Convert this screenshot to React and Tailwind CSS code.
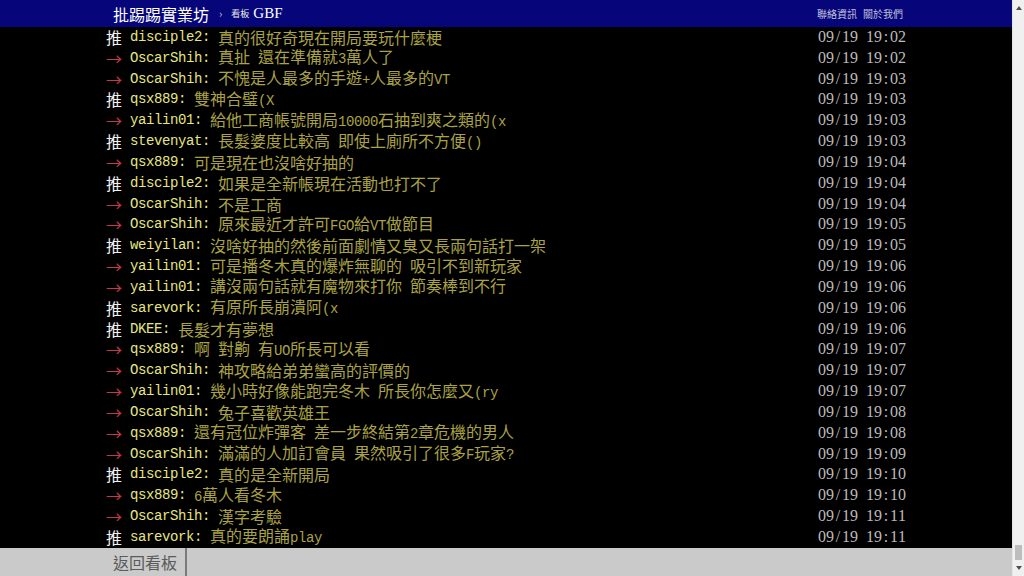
const pushes = [
  ['推', 'disciple2', '真的很好奇現在開局要玩什麼梗', '09/19 19:02'],
  ['→', 'OscarShih', '真扯 還在準備就3萬人了', '09/19 19:02'],
  ['→', 'OscarShih', '不愧是人最多的手遊+人最多的VT', '09/19 19:03'],
  ['推', 'qsx889', '雙神合璧(X', '09/19 19:03'],
  ['→', 'yailin01', '給他工商帳號開局10000石抽到爽之類的(x', '09/19 19:03'],
  ['推', 'stevenyat', '長髮婆度比較高 即使上廁所不方便()', '09/19 19:03'],
  ['→', 'qsx889', '可是現在也沒啥好抽的', '09/19 19:04'],
  ['推', 'disciple2', '如果是全新帳現在活動也打不了', '09/19 19:04'],
  ['→', 'OscarShih', '不是工商', '09/19 19:04'],
  ['→', 'OscarShih', '原來最近才許可FGO給VT做節目', '09/19 19:05'],
  ['推', 'weiyilan', '沒啥好抽的然後前面劇情又臭又長兩句話打一架', '09/19 19:05'],
  ['→', 'yailin01', '可是播冬木真的爆炸無聊的 吸引不到新玩家', '09/19 19:06'],
  ['→', 'yailin01', '講沒兩句話就有魔物來打你 節奏棒到不行', '09/19 19:06'],
  ['推', 'sarevork', '有原所長崩潰阿(x', '09/19 19:06'],
  ['推', 'DKEE', '長髮才有夢想', '09/19 19:06'],
  ['→', 'qsx889', '啊 對齁 有UO所長可以看', '09/19 19:07'],
  ['→', 'OscarShih', '神攻略給弟弟蠻高的評價的', '09/19 19:07'],
  ['→', 'yailin01', '幾小時好像能跑完冬木 所長你怎麼又(ry', '09/19 19:07'],
  ['→', 'OscarShih', '兔子喜歡英雄王', '09/19 19:08'],
  ['→', 'qsx889', '還有冠位炸彈客 差一步終結第2章危機的男人', '09/19 19:08'],
  ['→', 'OscarShih', '滿滿的人加訂會員 果然吸引了很多F玩家?', '09/19 19:09'],
  ['推', 'disciple2', '真的是全新開局', '09/19 19:10'],
  ['→', 'qsx889', '6萬人看冬木', '09/19 19:10'],
  ['→', 'OscarShih', '漢字考驗', '09/19 19:11'],
  ['推', 'sarevork', '真的要朗誦play', '09/19 19:11'],
];

// half-width runs get the narrow mono face, the rest stays CJK
const Mixed = ({ text }) =>
  text.split(/([\x00-\x7F]+)/).map((part, i) =>
    i % 2 === 1 ? (
      <span key={i} className="font-['Liberation_Mono'] text-[14px] tracking-[-0.4px]">
        {part}
      </span>
    ) : (
      <span key={i}>{part}</span>
    )
  );

const Stamp = ({ value }) => (
  <span className="shrink-0 font-['Liberation_Serif'] text-[16px] text-[#bbbbbb]">
    {value.split('').map((ch, i) => (
      <span key={i} className="inline-block w-[8px] text-center">
        {ch === ' ' ? '\u00a0' : ch}
      </span>
    ))}
  </span>
);

const PushRow = ({ tag, user, content, time }) => (
  <div className="flex h-[20.84px] items-center leading-[20.84px] whitespace-pre">
    <span
      className={
        tag === '推'
          ? 'inline-block w-[24px] shrink-0 text-[#f2f2f2]'
          : 'inline-block w-[24px] shrink-0 text-[#c23a4a]'
      }
    >
      {tag}
    </span>
    <span className="shrink-0 font-['Liberation_Mono'] text-[14px] tracking-[-0.4px] text-[#e6e682]">
      {user + ': '}
    </span>
    <span className="flex-1 min-w-0 text-[#aaa244]">
      <Mixed text={content} />
    </span>
    <Stamp value={time} />
  </div>
);

const Scrollbar = () => (
  <div className="flex w-[12px] shrink-0 flex-col bg-[#f0f0f0] border-l border-[#e4e4e4]">
    <div className="flex h-[16px] items-center justify-center">
      <div className="h-0 w-0 border-x-[3px] border-b-[4px] border-x-transparent border-b-[#505050]" />
    </div>
    <div className="flex flex-1 flex-col justify-end px-[2px]">
      <div className="h-[15px] bg-[#bdbdbd]" />
    </div>
    <div className="flex h-[16px] items-center justify-center">
      <div className="h-0 w-0 border-x-[3px] border-t-[4px] border-x-transparent border-t-[#505050]" />
    </div>
  </div>
);

export default function App() {
  return (
    <div className="flex h-[576px] w-[1024px] overflow-hidden bg-black font-['Noto_Sans_CJK_TC',sans-serif]">
      <div className="flex min-w-0 flex-1 flex-col">
        <div className="h-[27px] shrink-0 bg-[#06067a]">
          <div className="mx-auto flex h-full w-[800px] items-center pl-[7px] pr-[3px]">
            <span className="text-[16px] leading-none text-white">批踢踢實業坊</span>
            <span className="ml-[10px] text-[11px] leading-none text-[#c8c8d8]">›</span>
            <span className="ml-[9px] text-[9px] leading-none text-[#e8e8e8]">看板</span>
            <span className="ml-[4px] font-['Liberation_Serif'] text-[15px] leading-none text-white">GBF</span>
            <div className="ml-auto flex gap-[6px] text-[10px] leading-none text-[#c0c0dc]">
              <span>聯絡資訊</span>
              <span>關於我們</span>
            </div>
          </div>
        </div>

        <div className="min-h-0 flex-1 overflow-hidden">
          <div className="mx-auto w-[800px] text-[16px]">
            {pushes.map(([tag, user, content, time], i) => (
              <PushRow key={i} tag={tag} user={user} content={content} time={time} />
            ))}
          </div>
        </div>

        <div className="h-[28px] shrink-0 bg-[#cacaca]">
          <div className="mx-auto flex h-full w-[800px]">
            <span className="flex items-center border-r-2 border-[#7a7a7a] pl-[7px] pr-[8px] text-[16px] text-[#5a5a5a]">
              返回看板
            </span>
          </div>
        </div>
      </div>
      <Scrollbar />
    </div>
  );
}
